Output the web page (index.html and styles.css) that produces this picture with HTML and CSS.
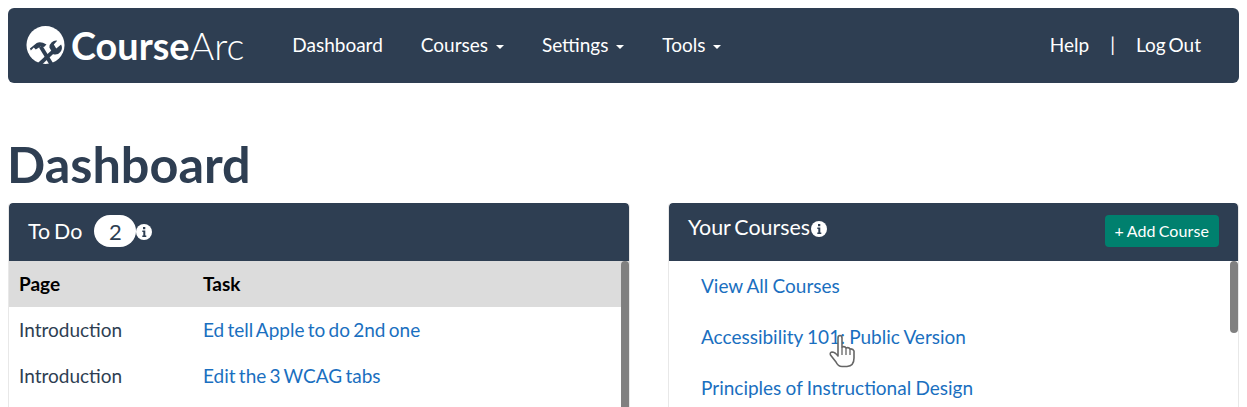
FILE: index.html
```html
<!DOCTYPE html>
<html lang="en">
<head>
    <meta charset="UTF-8">
    <title>CourseArc - Dashboard</title>
    <link rel="stylesheet" href="styles.css">
</head>
<body>
    <header class="navbar">
        <a class="brand" href="#">
            <svg class="brand-icon" viewBox="0 0 40 40" aria-hidden="true">
                <circle cx="20" cy="19.500" r="19.500" fill="#fff"/>
                <path d="M4 23 L11 17.500 Q15 15.500 21 19 L18.500 21.500 L15 21 L10 24 L8 22 L5 25Z" fill="#2e3e52"/>
                <path d="M15 21 L26 39" stroke="#2e3e52" stroke-width="4" fill="none"/>
                <path d="M29 25 L13 40" stroke="#2e3e52" stroke-width="4" fill="none"/>
                <path d="M24 22 A7 7 0 0 1 32 15 L28.500 19 L31 23 L36 19 A7 7 0 0 1 28 29 Z" fill="#2e3e52"/>
            </svg>
            <span class="brand-bold">Course</span><span class="brand-light">Arc</span>
        </a>
        <nav class="nav-main">
            <a href="#">Dashboard</a>
            <a href="#">Courses <i class="caret"></i></a>
            <a href="#">Settings <i class="caret"></i></a>
            <a href="#">Tools <i class="caret"></i></a>
        </nav>
        <nav class="nav-user">
            <a href="#">Help</a>
            <span class="divider">|</span>
            <a href="#">Log Out</a>
        </nav>
    </header>

    <h1>Dashboard</h1>

    <div class="columns">
        <section class="panel">
            <div class="panel-head">
                <h2>To Do</h2>
                <span class="count">2</span>
                <svg class="info" viewBox="0 0 16 16" aria-hidden="true">
                    <circle cx="8" cy="8" r="8" fill="#fff"/>
                    <path d="M6.300 6.600h3v5h1v1.400h-4v-1.400h1v-3.600h-1z M7 3h2.300v2.200h-2.300z" fill="#2e3e52"/>
                </svg>
            </div>
            <div class="panel-body">
                <div class="scroll-thumb thumb-long"></div>
                <table>
                    <thead>
                        <tr><th>Page</th><th>Task</th></tr>
                    </thead>
                    <tbody>
                        <tr><td>Introduction</td><td><a href="#">Ed tell Apple to do 2nd one</a></td></tr>
                        <tr><td>Introduction</td><td><a href="#">Edit the 3 WCAG tabs</a></td></tr>
                    </tbody>
                </table>
            </div>
        </section>

        <section class="panel">
            <div class="panel-head courses-head">
                <h2>Your Courses</h2>
                <svg class="info" viewBox="0 0 16 16" aria-hidden="true">
                    <circle cx="8" cy="8" r="8" fill="#fff"/>
                    <path d="M6.300 6.600h3v5h1v1.400h-4v-1.400h1v-3.600h-1z M7 3h2.300v2.200h-2.300z" fill="#2e3e52"/>
                </svg>
                <a class="btn-add" href="#">+ Add Course</a>
            </div>
            <div class="panel-body">
                <div class="scroll-thumb thumb-short"></div>
                <ul class="course-list">
                    <li><a href="#">View All Courses</a></li>
                    <li><a href="#">Accessibility 101: Public Version</a></li>
                    <li><a href="#">Principles of Instructional Design</a></li>
                </ul>
                <svg class="hand-cursor" viewBox="0 0 26 34" aria-hidden="true">
                    <path d="M9 19 V4 Q9 1.500 11 1.500 Q13 1.500 13 4 V13 Q16 12 17 14 Q20 13 21 15 Q24 14.500 25 17 V24 Q25 32 18 32.500 H13 Q9 32.500 7 28 L1.500 21 Q0.500 18.500 3 18 Q6 18 9 22Z" fill="#fff" stroke="#666" stroke-width="1.600" stroke-linejoin="round"/>
                    <path d="M13 13 V21 M17 14 V21 M21 15 V21" fill="none" stroke="#666" stroke-width="1.300"/>
                </svg>
            </div>
        </section>
    </div>
</body>
</html>
```

FILE: styles.css
```css
:root {
    --navy: #2e3e52;
    --link: #1a6fc0;
    --thumb: #808080;
}

html, body {
    height: 407px;
    overflow: hidden;
}

body {
    margin: 0;
    padding: 8px 8px 0;
    box-sizing: border-box;
    background-color: white;
    font-family: Lato, 'Open Sans', sans-serif;
    font-size: 19px;
    color: #2e3e52;
}

a {
    text-decoration: none;
}

.navbar {
    background-color: var(--navy);
    border-radius: 6px;
    height: 75px;
    display: flex;
    align-items: center;
    padding: 0 38px 0 18px;
}

.brand {
    display: flex;
    align-items: center;
    color: white;
    font-size: 37.8px;
    margin-right: 48px;
}

.brand-icon {
    width: 39px;
    height: 39px;
    margin-right: 6px;
}

.brand-bold {
    font-weight: 700;
}

.brand-light {
    font-weight: 300;
}

.nav-main {
    display: flex;
    gap: 38px;
    margin-top: -2px;
}

.nav-main a, .nav-user a, .divider {
    color: white;
}

.caret {
    display: inline-block;
    border-top: 4.5px solid white;
    border-left: 4.5px solid transparent;
    border-right: 4.5px solid transparent;
    vertical-align: middle;
    margin-left: 3px;
}

.nav-user {
    margin-left: auto;
    margin-top: -2px;
    display: flex;
    gap: 21px;
    word-spacing: -2px;
}

h1 {
    font-size: 50.4px;
    font-weight: 700;
    line-height: 60px;
    margin: 51px 0 9px -1px;
    color: var(--navy);
}

.columns {
    display: grid;
    grid-template-columns: 622px 571px;
    gap: 38px;
}

.panel {
    border: 1px solid #e8e8e8;
    border-top: none;
    border-radius: 4px 4px 0 0;
    height: 204px;
    overflow: hidden;
}

.panel-head {
    background-color: var(--navy);
    color: white;
    height: 58px;
    box-sizing: border-box;
    padding: 0 19px 2px;
    border-radius: 4px 4px 0 0;
    display: flex;
    align-items: center;
}

.panel-head h2 {
    margin: 0;
    font-size: 21.4px;
    font-weight: 400;
    word-spacing: -1.5px;
}

.count {
    background-color: white;
    color: var(--navy);
    border-radius: 16px;
    width: 42px;
    height: 32px;
    margin-left: 12px;
    display: flex;
    align-items: center;
    justify-content: center;
    font-size: 22px;
}

.info {
    width: 16px;
    height: 16px;
    margin-top: 2px;
}

.courses-head h2 {
    margin-top: -8px;
}

.courses-head .info {
    margin-top: -5px;
    margin-left: 1px;
}

.btn-add {
    margin-left: auto;
    background-color: #00806e;
    color: white;
    font-size: 16px;
    border-radius: 4px;
    padding: 0 10px;
    height: 32px;
    line-height: 32px;
    margin-right: 0;
    word-spacing: -1px;
    letter-spacing: 0.1px;
}

.panel-body {
    position: relative;
}

.scroll-thumb {
    position: absolute;
    top: 0;
    right: 0;
    width: 8px;
    background-color: var(--thumb);
    border-radius: 4px;
}

.thumb-long {
    height: 240px;
}

.thumb-short {
    height: 72px;
}

table {
    width: 100%;
    border-collapse: collapse;
}

th, td {
    text-align: left;
    height: 46px;
    box-sizing: border-box;
    padding: 0 10px 2px;
    font-weight: 400;
}

th {
    background-color: #dcdcdc;
    color: black;
    font-weight: 700;
}

th:first-child, td:first-child {
    width: 184px;
}

td a {
    color: var(--link);
    word-spacing: -1.6px;
}

.course-list a {
    color: var(--link);
    word-spacing: -0.6px;
}

.course-list {
    list-style: none;
    margin: 0;
    padding: 0 32px;
}

.course-list li {
    height: 51px;
    line-height: 49px;
}

.hand-cursor {
    position: absolute;
    left: 160px;
    top: 73px;
    width: 26px;
    height: 34px;
}
```
